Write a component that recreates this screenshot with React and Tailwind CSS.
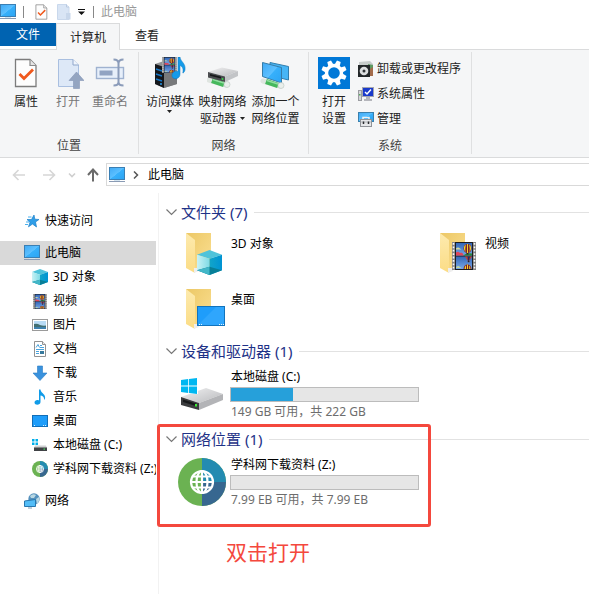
import React from "react";

function Defs() {
  return (
    <svg className="absolute size-0" aria-hidden="true">
      <defs>
        <linearGradient id="screen" x1="0" y1="0" x2="1" y2="1">
          <stop offset="0" stopColor="#3fa9f5" />
          <stop offset="0.5" stopColor="#5cc0ff" />
          <stop offset="0.52" stopColor="#37b0fb" />
          <stop offset="1" stopColor="#2ba4f3" />
        </linearGradient>
        <linearGradient id="folderBack" x1="0" y1="0" x2="1" y2="1">
          <stop offset="0" stopColor="#ecc866" />
          <stop offset="1" stopColor="#fbdf92" />
        </linearGradient>
        <linearGradient id="folderFront" x1="0" y1="0" x2="0" y2="1">
          <stop offset="0" stopColor="#fdeaae" />
          <stop offset="1" stopColor="#fbdc85" />
        </linearGradient>
        <linearGradient id="cubeLeft" x1="0" y1="0" x2="1" y2="0">
          <stop offset="0" stopColor="#c9f2f5" />
          <stop offset="1" stopColor="#7fdbe6" />
        </linearGradient>
        <linearGradient id="cubeRight" x1="0" y1="0" x2="1" y2="0">
          <stop offset="0" stopColor="#12a5c9" />
          <stop offset="1" stopColor="#0093d3" />
        </linearGradient>
        <linearGradient id="metal" x1="0" y1="0" x2="1" y2="1">
          <stop offset="0" stopColor="#f1f1f2" />
          <stop offset="1" stopColor="#b9babd" />
        </linearGradient>
        <linearGradient id="sky" x1="0" y1="0" x2="0" y2="1">
          <stop offset="0" stopColor="#3267b8" />
          <stop offset="1" stopColor="#79a8e6" />
        </linearGradient>
      </defs>
    </svg>
  );
}

function Monitor({ className = "h-4 w-4" }) {
  return (
    <svg viewBox="0 0 16 16" className={className} aria-hidden="true">
      <rect x="0.5" y="0.5" width="15" height="12" fill="url(#screen)" stroke="#3a7fb4" />
      <rect x="5" y="13" width="6" height="1" fill="#d3e4f0" />
      <rect x="0" y="14" width="16" height="1" fill="#8a9bb4" />
    </svg>
  );
}

function CheckDoc({ className }) {
  return (
    <svg viewBox="0 0 24 30" className={className} aria-hidden="true">
      <path d="M1.5 1.5H16L22 7.5V28.5H1.5Z" fill="#fdfdfd" stroke="#7c7c7c" strokeWidth="1.3" />
      <path d="M16 1.5V7.5H22" fill="#e4e4e4" stroke="#8a8a8a" strokeWidth="1.2" />
      <path d="M5.5 16L10 20.5L19 11.5" fill="none" stroke="#f0581c" strokeWidth="2.8" />
    </svg>
  );
}

function FadedDoc() {
  return (
    <svg viewBox="0 0 14 16" className="h-4 w-3.5" aria-hidden="true">
      <path d="M0.5 0.5H9.5L12 3V15.5H0.5Z" fill="#d9e5f5" stroke="#c9d8ec" />
      <path d="M9 9H13.5V15.5H9Z" fill="#c8d7eb" />
      <path d="M9.5 0.5V3H12" fill="#eef3fa" stroke="#b9c9e0" />
    </svg>
  );
}

function OpenIcon() {
  return (
    <svg viewBox="0 0 32 32" className="size-8" aria-hidden="true">
      <path d="M6.5 2.5H21L26.5 8V29.5H6.5Z" fill="#dde8f7" stroke="#a9bfe0" />
      <path d="M21 2.5V8H26.5" fill="#f0f5fc" stroke="#8fa6cb" />
      <path d="M24.500 15L32 23.500H27.500V31.500H21.500V23.500H17Z" fill="#94a5c1" stroke="#8496b5" strokeWidth="0.6" />
    </svg>
  );
}

function RenameIcon() {
  return (
    <svg viewBox="0 0 32 32" className="size-8" aria-hidden="true">
      <rect x="2.500" y="10.500" width="27" height="11" fill="#e7effa" stroke="#9fb2d0" strokeWidth="1.4" />
      <rect x="5.500" y="13.500" width="13" height="5" fill="#91a3c2" />
      <path d="M19.500 2.500Q24.500 2.500 24.500 6.500Q24.500 2.500 29.500 2.500M24.500 5V26M19.500 28.500Q24.500 28.500 24.500 25Q24.500 28.500 29.500 28.500" fill="none" stroke="#8b9cba" strokeWidth="2" />
    </svg>
  );
}

function FilmArt({ x, y, w, h }) {
  return (
    <svg x={x} y={y} width={w} height={h} viewBox="0 0 24 28" preserveAspectRatio="none">
      <rect width="24" height="28" fill="#858585" />
      <rect x="3" y="0" width="18" height="28" fill="#1c1d20" />
      <rect x="4" y="1" width="16" height="12.500" fill="url(#sky)" />
      <rect x="4" y="14.500" width="16" height="12.500" fill="url(#sky)" />
      <path d="M4 10.500Q6 9 8 11Q10 9.500 12 13.500H4Z" fill="#e0455a" />
      <path d="M11 13.500Q15 10.500 20 11.500V13.500Z" fill="#288a3e" />
      <ellipse cx="15.500" cy="6.500" rx="4" ry="4.500" fill="#7a1f2a" />
      <path d="M12.500 3.800Q11 7 13.500 10.200Q13 7 13.800 2.600ZM15 2V11H16V2ZM18.500 3.800Q20 7 17.500 10.200Q18 7 17.200 2.600Z" fill="#f4d22a" />
      <rect x="14.500" y="11" width="2" height="1.500" fill="#3b2419" />
      <path d="M4 6.500Q6 4.500 8 6.500L9.500 7.500H4Z" fill="#d8dc9a" />
      <path d="M13 14.500H20L17 19H16Z" fill="#c9402f" />
      <path d="M15.500 14.500H18L17 19H16Z" fill="#242e63" />
      <rect x="15.800" y="19" width="1.600" height="1.200" fill="#3b2419" />
      <path d="M11.500 27A4 4.500 0 0 1 19.500 27Z" fill="#7a1f2a" />
      <path d="M12.500 27Q12.500 24.500 14 23.200V27ZM15 27V22.600H16V27ZM17.200 27V23.200Q18.500 24.500 18.500 27Z" fill="#f4d22a" />
      <path d="M4 25.500Q6 23 8 25L9.500 26H4Z" fill="#bad3a1" />
      <path d="M1.500 1V28M22.500 1V28" stroke="#fafafa" strokeWidth="1.600" strokeDasharray="1.800 1.600" />
    </svg>
  );
}

function MediaIcon() {
  return (
    <svg viewBox="0 0 32 32" className="size-8" aria-hidden="true">
      <path d="M1 7L10 4L23 6V27L10 31L1 27Z" fill="#909294" />
      <path d="M1 7L10 10V31L1 27Z" fill="#14171b" />
      <path d="M10 10L23 7V27L10 31Z" fill="#77797b" />
      <path d="M2 12L8 14M2 17L8 19M2 22L8 24" stroke="#1678c8" strokeWidth="1.500" />
      <circle cx="7" cy="27" r="0.900" fill="#2aa8ff" />
      <FilmArt x="8" y="0" w="15" h="16" />
      <path d="M24 0H26C26.500 5 32 6 31 13C30.500 15 29.500 16 28.800 16C30 11 27.500 9 26 8.500V17C26 23 18 23 18 18.500C18 15 21.500 13.500 24 14.500Z" fill="#159be9" stroke="#0876c1" strokeWidth="0.500" />
    </svg>
  );
}

function Cable() {
  return (
    <g>
      <path d="M3 21L20 26" stroke="#dfe5e1" strokeWidth="5" strokeLinecap="round" />
      <path d="M6 21.500L18 25.500" stroke="#46b85c" strokeWidth="5.500" />
      <path d="M7 20.500L18 24" stroke="#91dda0" strokeWidth="1.500" />
      <circle cx="21" cy="25.500" r="3" fill="#e9eeeb" stroke="#b8c4bd" strokeWidth="0.600" />
    </g>
  );
}

function MapDriveIcon() {
  return (
    <svg viewBox="0 0 32 32" className="size-8" aria-hidden="true">
      <g transform="translate(-1 2)"><Cable /></g>
      <path d="M1 15L15 10.500L31 14L18 19.500Z" fill="url(#metal)" />
      <path d="M1 15L18 19.500V25L1 20.500Z" fill="#4a4c4f" />
      <path d="M3 17L14 19.800V21.500L3 18.700Z" fill="#16181a" />
      <path d="M18 19.500L31 14V19L18 25Z" fill="#c2c4c7" />
      <circle cx="15.500" cy="22" r="0.900" fill="#35dd46" />
    </svg>
  );
}

function AddPlaceIcon() {
  return (
    <svg viewBox="0 0 32 32" className="size-8" aria-hidden="true">
      <path d="M10 5.500L28.500 9.500V23L10 18.500Z" fill="#47b5f5" stroke="#327fae" />
      <path d="M2.500 5.500L21.500 10.500V26L2.500 19.500Z" fill="url(#screen)" stroke="#367da8" />
      <g transform="translate(0 3)"><Cable /></g>
    </svg>
  );
}

function GearTile() {
  const teeth = [0, 45, 90, 135, 180, 225, 270, 315];
  return (
    <svg viewBox="0 0 32 32" className="size-8" aria-hidden="true">
      <rect width="32" height="32" fill="#0078d7" />
      <circle cx="16" cy="16" r="7.500" fill="none" stroke="#fff" strokeWidth="3.400" />
      {teeth.map((a) => (
        <path key={a} d="M13.300 8L14 3.300H18L18.700 8Z" fill="#fff" transform={`rotate(${a + 22.5} 16 16)`} />
      ))}
    </svg>
  );
}

function ProgramsIcon() {
  return (
    <svg viewBox="0 0 16 16" className="size-4" aria-hidden="true">
      <path d="M1 1L12 0L15 3V15H7L1 5Z" fill="#c7cccb" />
      <path d="M10 3L15 4V15L10 12Z" fill="#5d9a62" />
      <path d="M12 8L15 6V15H12Z" fill="#a36b4a" />
      <rect x="0" y="4" width="12" height="12" fill="#232729" />
      <circle cx="6" cy="10" r="4.300" fill="#dddfe0" />
      <circle cx="6" cy="10" r="1.500" fill="#303437" />
    </svg>
  );
}

function PropertiesIcon() {
  return (
    <svg viewBox="0 0 16 16" className="size-4" aria-hidden="true">
      <rect x="0.500" y="4.500" width="3" height="10" fill="#d4d5d8" stroke="#9b9da2" />
      <rect x="1" y="8" width="1.500" height="1.500" fill="#54ab5b" />
      <rect x="4.500" y="1.500" width="11" height="9" fill="#1a3acb" stroke="#a4a6b0" />
      <path d="M7 6L9 8L13 3.500" fill="none" stroke="#fff" strokeWidth="1.500" />
      <path d="M8 11H12V13H14V15H6V13H8Z" fill="#b5b6bc" />
    </svg>
  );
}

function ManageIcon() {
  return (
    <svg viewBox="0 0 16 16" className="size-4" aria-hidden="true">
      <rect x="0.500" y="1.500" width="15" height="9" fill="url(#screen)" stroke="#3b80ad" />
      <path d="M5 8V6.500H11V8" fill="none" stroke="#eef1f2" strokeWidth="1.500" />
      <rect x="2.500" y="8.500" width="11" height="7" fill="#e6e7e9" stroke="#909398" />
      <path d="M3 11H13" stroke="#b4b6ba" />
      <path d="M5.500 10.500V13M10.500 10.500V13" stroke="#2b2d30" strokeWidth="1.500" />
    </svg>
  );
}

function StarIcon() {
  return (
    <svg viewBox="0 0 16 16" className="size-4" aria-hidden="true">
      <path d="M10 2L10.800 6.200L15 6.500L11.500 9L12.500 14L8.500 11L4.500 13.800L6 9.300L3 6.500H7.500Z" fill="#2f9ee8" stroke="#1b7fc9" strokeWidth="0.700" />
      <path d="M4 4H7.500M2 9H5M1 11.500H4" stroke="#4ab1ee" />
    </svg>
  );
}

function Cube({ x = 0, y = 0, size = 16 }) {
  return (
    <svg x={x} y={y} width={size} height={size} viewBox="0 0 24 24" aria-hidden="true">
      <path d="M0 4.500L12 0L24 4.500L12 8.500Z" fill="#4fc3da" />
      <path d="M0 4.500L12 8.500V24L0 19.500Z" fill="url(#cubeLeft)" />
      <path d="M24 4.500L12 8.500V24L24 19.500Z" fill="url(#cubeRight)" />
      <path d="M0 19.500L12 16L24 19.500L12 24Z" fill="#087f97" />
      <path d="M0 19.500L12 16V24Z" fill="#42b7c8" />
    </svg>
  );
}

function FilmIcon() {
  return (
    <svg viewBox="0 0 16 16" className="size-4" aria-hidden="true">
      <FilmArt x="1" y="1" w="14" h="15" />
    </svg>
  );
}

function PictureIcon() {
  return (
    <svg viewBox="0 0 16 16" className="size-4" aria-hidden="true">
      <rect x="0.500" y="2.500" width="15" height="11" fill="#fff" stroke="#9a9a9a" />
      <rect x="2" y="4" width="12" height="8" fill="#b8dbf5" />
      <path d="M2 7Q5 6 8 8Q11 9 14 8.500V10H2Z" fill="#426f72" />
      <rect x="2" y="10" width="12" height="2" fill="#3d80ae" />
    </svg>
  );
}

function DocumentIcon() {
  return (
    <svg viewBox="0 0 16 16" className="size-4" aria-hidden="true">
      <path d="M2.500 0.500H10.500L13.500 3.500V15.500H2.500Z" fill="#fff" stroke="#929292" />
      <path d="M10.500 0.500V3.500H13.500" fill="#eee" stroke="#929292" />
      <path d="M4 6.500L6 3.500L7.500 6.500M8 4.500H10M8 6.500H12M4 8.500H12M4 10.500H7M4 12.500H7" fill="none" stroke="#4aa3dd" />
      <rect x="8" y="10" width="4" height="3" fill="#36799d" />
    </svg>
  );
}

function DownloadIcon() {
  return (
    <svg viewBox="0 0 16 16" className="size-4" aria-hidden="true">
      <path d="M5.500 1H10.500V8H15L8 15.500L1 8H5.500Z" fill="#3a92dd" stroke="#2a7cc4" strokeWidth="0.600" />
    </svg>
  );
}

function MusicIcon() {
  return (
    <svg viewBox="0 0 16 16" className="size-4" aria-hidden="true">
      <path d="M7 0.500H8.500C8.500 4 14 5 13 9.500Q12.500 10.500 12 11C12.500 8 10.500 6.500 8.500 6.500V13C8.500 16.500 2.500 16.500 2.500 13.500C2.500 11.500 5 10.500 7 11.500Z" fill="#109be8" />
    </svg>
  );
}

function DesktopIcon() {
  return (
    <svg viewBox="0 0 16 16" className="size-4" aria-hidden="true">
      <rect x="0.500" y="2.500" width="15" height="11" fill="#1e9dfa" stroke="#116eb8" />
      <path d="M2 12.500H4M11 12.500H14" stroke="#d9f0ff" strokeDasharray="1 1" />
    </svg>
  );
}

function WinFlag({ x, y, size }) {
  return (
    <svg x={x} y={y} width={size} height={size} viewBox="0 0 16 16">
      <path d="M0 2L7.200 1V7.600H0ZM8 0.900L16 0V7.600H8ZM0 8.400H7.200V15L0 14ZM8 8.400H16V16L8 15.100Z" fill="#00b7f1" />
    </svg>
  );
}

function SmallDrive() {
  return (
    <svg viewBox="0 0 16 16" className="size-4" aria-hidden="true">
      <path d="M0 2H2.500V4.500H0ZM3.500 2H6V4.500H3.500ZM0 5.500H2.500V8H0ZM3.500 5.500H6V8H3.500Z" fill="#00aeea" />
      <path d="M3 8.500H14L15 11H2Z" fill="#d0d1d3" />
      <rect x="2" y="10.500" width="13" height="3.500" fill="#404245" />
      <rect x="11.500" y="11.500" width="1.500" height="1.200" fill="#45dd63" />
    </svg>
  );
}

function GlobeDrive({ className }) {
  return (
    <svg viewBox="0 0 48 48" className={className} aria-hidden="true">
      <circle cx="24" cy="24" r="24" fill="#6bb252" />
      <path d="M24 0A24 24 0 0 1 48 24H24Z" fill="#238bb1" />
      <path d="M48 24A24 24 0 0 1 24 48V24Z" fill="#376790" />
      <g fill="none" stroke="#fff" strokeWidth="2.200">
        <circle cx="24" cy="24" r="11" />
        <ellipse cx="24" cy="24" rx="5.500" ry="11" />
        <path d="M24 13V35M13 24H35M15 18.500H33M15 29.500H33" />
      </g>
    </svg>
  );
}

function NetworkIcon() {
  return (
    <svg viewBox="0 0 16 16" className="size-4" aria-hidden="true">
      <circle cx="10" cy="6" r="5.700" fill="#5591bd" />
      <path d="M6 3Q9 0 12 2L10 5L7 5ZM12 6L15 4Q16 8 13 11Z" fill="#b9d8e3" />
      <path d="M0.500 8L11.500 6.500V13.500H0.500Z" fill="#53bdf7" stroke="#2877ae" />
      <path d="M4 15H8" stroke="#7f9db4" />
    </svg>
  );
}

function Folder({ children }) {
  return (
    <svg viewBox="0 0 48 48" className="size-12 shrink-0" aria-hidden="true">
      <path d="M8 6H33V41H16Z" fill="url(#folderBack)" />
      <path d="M8 6L17 13V46L8 41Z" fill="url(#folderFront)" />
      <path d="M16 46L21 44V41H16Z" fill="#eee" />
      {children}
    </svg>
  );
}

function LocalDrive() {
  return (
    <svg viewBox="0 0 48 48" className="size-12 shrink-0" aria-hidden="true">
      <path d="M3 27L28 18L45 24L21 33Z" fill="url(#metal)" />
      <path d="M3 27L21 33V40L3 35Z" fill="#3b3c3e" />
      <path d="M21 33L45 24V30L21 40Z" fill="#b3b4b7" />
      <path d="M5 29.500L18 33.500V36L5 32Z" fill="#17191a" />
      <rect x="17" y="34" width="2" height="2.500" fill="#3bea34" />
      <rect x="2" y="6" width="18" height="18" fill="#fff" />
      <WinFlag x="3" y="8" size="16" />
    </svg>
  );
}

function Caret() {
  return (
    <svg viewBox="0 0 5 3" className="h-[3px] w-[5px]" aria-hidden="true">
      <path d="M0 0H5L2.500 3Z" fill="#222" />
    </svg>
  );
}

function BigButton({ icon, lines, muted, caret }) {
  return (
    <button
      type="button"
      className={`flex flex-col items-center gap-1 whitespace-nowrap leading-[17px] ${muted ? "text-[#777]" : "text-[#222]"}`}
    >
      {icon}
      <span className="flex flex-col items-center">
        {lines.map((line, i) => (
          <span key={line} className="flex items-center gap-1">
            {line}
            {caret && i === 1 && <Caret />}
          </span>
        ))}
        {caret && lines.length === 1 && <Caret />}
      </span>
    </button>
  );
}

function Group({ label, className, children }) {
  return (
    <section aria-label={label} className={`flex flex-col justify-between border-r border-[#dfe0e1] pt-[5px] ${className}`}>
      <div className="flex items-start pl-[5px]">{children}</div>
      <div className="mt-1.5 text-center leading-[17px] text-[#444]">{label}</div>
    </section>
  );
}

function NavArrow({ label, color, children, className }) {
  return (
    <button type="button" aria-label={label} className={`flex justify-center ${className}`}>
      <svg viewBox="0 0 14 14" className="size-3.5" fill="none" stroke={color} strokeWidth="1.600">
        {children}
      </svg>
    </button>
  );
}

function NavRow({ icon, children, nested, selected }) {
  return (
    <a
      href="#"
      aria-current={selected ? "page" : undefined}
      className={`flex h-6 items-center gap-[5px] overflow-hidden whitespace-nowrap ${nested ? "pl-8" : "pl-6"} ${selected ? "bg-[#d9d9d9]" : ""}`}
    >
      <span className="size-4 shrink-0">{icon}</span>
      <span>{children}</span>
    </a>
  );
}

function Heading({ children }) {
  return (
    <h2 className="flex h-[22px] items-center text-[15px] text-[#1e3287]">
      <button type="button" className="flex items-center gap-1 whitespace-nowrap pl-[7px]">
        <svg viewBox="0 0 11 7" className="h-[7px] w-[11px]" fill="none" stroke="#777" strokeWidth="1.200" aria-hidden="true">
          <path d="M0.500 0.500L5.500 5.500L10.500 0.500" />
        </svg>
        {children}
      </button>
      <span className="ml-[7px] h-px flex-1 bg-[#e2e2e2]" />
    </h2>
  );
}

function FolderItem({ name, children }) {
  return (
    <a href="#" className="flex h-14 items-start gap-[5px]">
      <Folder>{children}</Folder>
      <span className="pt-2 leading-[17px]">{name}</span>
    </a>
  );
}

function DriveItem({ icon, name, detail, percent }) {
  return (
    <a href="#" className="flex gap-1 pb-2 pl-[19px] pt-[7px]">
      <span className="pt-px">{icon}</span>
      <span className="flex flex-col gap-0.5 leading-4">
        <span className="pl-px">{name}</span>
        <span
          role="meter"
          aria-label={name}
          aria-valuemin={0}
          aria-valuemax={100}
          aria-valuenow={percent}
          className="block h-[15px] w-[189px] border border-[#bcbcbc] bg-[#e6e6e6]"
        >
          <span className="block h-full bg-[#26a0da]" style={{ width: `${percent}%` }} />
        </span>
        <span className="pl-px text-[#6d6d6d]">{detail}</span>
      </span>
    </a>
  );
}

export default function App() {
  return (
    <div className="min-h-screen overflow-hidden bg-white font-['Noto_Sans','Noto_Sans_CJK_SC',sans-serif] text-[12px] text-black">
      <Defs />
      <header>
        <div className="flex h-[23px] items-center text-[#999]">
          <Monitor />
          <span className="ml-[7px] h-3 w-px bg-[#888]" />
          <button type="button" aria-label="属性" className="ml-[11px]"><CheckDoc className="h-4 w-[13px]" /></button>
          <button type="button" aria-label="打开" className="ml-[9px]"><FadedDoc /></button>
          <button type="button" aria-label="自定义快速访问工具栏" className="ml-[7px]">
            <svg viewBox="0 0 7 6" className="h-1.5 w-[7px]"><path d="M0 0H7V1H0ZM0 2.500H7L3.500 6Z" fill="#111" /></svg>
          </button>
          <span className="ml-2 h-3 w-px bg-[#888]" />
          <span className="ml-[7px]">此电脑</span>
        </div>
        <div role="tablist" className="flex h-[27px] items-start border-b border-[#dadbdc] leading-[23px]">
          <button role="tab" type="button" className="w-14 bg-[#0063b1] text-white">文件</button>
          <button role="tab" type="button" aria-selected="true" className="-mb-px h-[27px] w-16 border border-b-0 border-[#dadbdc] bg-[#f5f6f7] text-[#222]">计算机</button>
          <button role="tab" type="button" className="w-[54px] pt-px text-[#222]">查看</button>
        </div>
        <div className="flex border-b border-[#dadbdc] bg-[#f5f6f7] pb-[3px] pt-0.5">
          <Group label="位置" className="w-[139px]">
            <div className="grid grid-cols-[42px_42px_42px]">
              <BigButton icon={<span className="flex size-8 items-center justify-center"><CheckDoc className="h-[30px] w-6" /></span>} lines={["属性"]} />
              <BigButton muted icon={<OpenIcon />} lines={["打开"]} />
              <BigButton muted icon={<RenameIcon />} lines={["重命名"]} />
            </div>
          </Group>
          <Group label="网络" className="w-[170px]">
            <div className="grid grid-cols-[52px_53px_53px]">
              <BigButton caret icon={<MediaIcon />} lines={["访问媒体"]} />
              <BigButton caret icon={<MapDriveIcon />} lines={["映射网络", "驱动器"]} />
              <BigButton icon={<AddPlaceIcon />} lines={["添加一个", "网络位置"]} />
            </div>
          </Group>
          <Group label="系统" className="w-[163px]">
            <div className="grid w-10"><BigButton icon={<GearTile />} lines={["打开", "设置"]} /></div>
            <div className="ml-1 flex flex-col gap-px whitespace-nowrap text-[#222]">
              <button type="button" className="flex h-6 items-center gap-[3px]"><ProgramsIcon />卸载或更改程序</button>
              <button type="button" className="flex h-6 items-center gap-[3px]"><PropertiesIcon />系统属性</button>
              <button type="button" className="flex h-6 items-center gap-[3px]"><ManageIcon />管理</button>
            </div>
          </Group>
        </div>
      </header>

      <div className="flex items-center pt-[5px]">
        <NavArrow label="后退" color="#d6d6d6" className="ml-3 w-3.5"><path d="M13 7H1.500M6.500 2L1.500 7L6.500 12" /></NavArrow>
        <NavArrow label="前进" color="#d6d6d6" className="ml-4 w-3.5"><path d="M1 7H12.500M7.500 2L12.500 7L7.500 12" /></NavArrow>
        <NavArrow label="最近浏览的位置" color="#cfcfcf" className="ml-[9px] w-3.5"><path d="M4 5.500L7 8.500L10 5.500" /></NavArrow>
        <NavArrow label="上移" color="#6a6a6a" className="ml-[7px] w-3.5"><path d="M7 13.500V2M2 7L7 1.500L12 7" strokeWidth="2" /></NavArrow>
        <div className="ml-1.5 flex h-[23px] flex-1 items-center border border-r-0 border-[#d9d9d9] pl-0.5">
          <Monitor />
          <svg viewBox="0 0 6 8" className="ml-2 h-2 w-1.5" fill="none" stroke="#555" strokeWidth="1.500" aria-hidden="true"><path d="M1 0.500L4.500 4L1 7.500" /></svg>
          <input aria-label="地址" defaultValue="此电脑" className="ml-[9px] min-w-0 flex-1 bg-transparent leading-4 outline-none" />
        </div>
      </div>

      <div className="mt-[7px] flex">
        <nav aria-label="导航窗格" className="w-[156px] shrink-0 pt-4">
          <NavRow icon={<StarIcon />}>快速访问</NavRow>
          <div className="my-2">
            <NavRow selected icon={<Monitor />}>此电脑</NavRow>
            <NavRow nested icon={<Cube />}>3D 对象</NavRow>
            <NavRow nested icon={<FilmIcon />}>视频</NavRow>
            <NavRow nested icon={<PictureIcon />}>图片</NavRow>
            <NavRow nested icon={<DocumentIcon />}>文档</NavRow>
            <NavRow nested icon={<DownloadIcon />}>下载</NavRow>
            <NavRow nested icon={<MusicIcon />}>音乐</NavRow>
            <NavRow nested icon={<DesktopIcon />}>桌面</NavRow>
            <NavRow nested icon={<SmallDrive />}>本地磁盘 (C:)</NavRow>
            <NavRow nested icon={<GlobeDrive className="size-4" />}>学科网下载资料 (Z:)</NavRow>
          </div>
          <NavRow icon={<NetworkIcon />}>网络</NavRow>
        </nav>

        <main className="ml-0.5 min-h-[401px] min-w-0 flex-1 border-l border-[#f2f2f2] pt-2">
          <section>
            <Heading>文件夹 (7)</Heading>
            <div className="mb-px grid grid-cols-[254px_1fr] pl-[19px] pt-1">
              <FolderItem name="3D 对象"><Cube x="19" y="23" size="25" /></FolderItem>
              <FolderItem name="视频"><FilmArt x="20" y="15" w="24" h="28" /></FolderItem>
              <FolderItem name="桌面">
                <rect x="19.500" y="23.500" width="27" height="19" fill="#1e9dfb" stroke="#1173bd" />
                <path d="M20 42L38 24H46V42Z" fill="#3fb0ff" opacity="0.500" />
                <path d="M21 41.500H24M41 41.500H46" stroke="#e2f4ff" strokeDasharray="1 1" />
              </FolderItem>
            </div>
          </section>
          <section>
            <Heading>设备和驱动器 (1)</Heading>
            <DriveItem icon={<LocalDrive />} name="本地磁盘 (C:)" detail="149 GB 可用，共 222 GB" percent={33} />
          </section>
          <section className="relative">
            <Heading>网络位置 (1)</Heading>
            <DriveItem icon={<GlobeDrive className="size-12 shrink-0" />} name="学科网下载资料 (Z:)" detail="7.99 EB 可用，共 7.99 EB" percent={0} />
            <span className="pointer-events-none absolute -left-0.5 -top-1 h-[103px] w-[274px] rounded-[3px] border-[3px] border-[#f4483d]" />
          </section>
          <p className="mt-[22px] pl-[67px] text-[21px] leading-7 text-[#f4483d]">双击打开</p>
        </main>
      </div>
    </div>
  );
}
